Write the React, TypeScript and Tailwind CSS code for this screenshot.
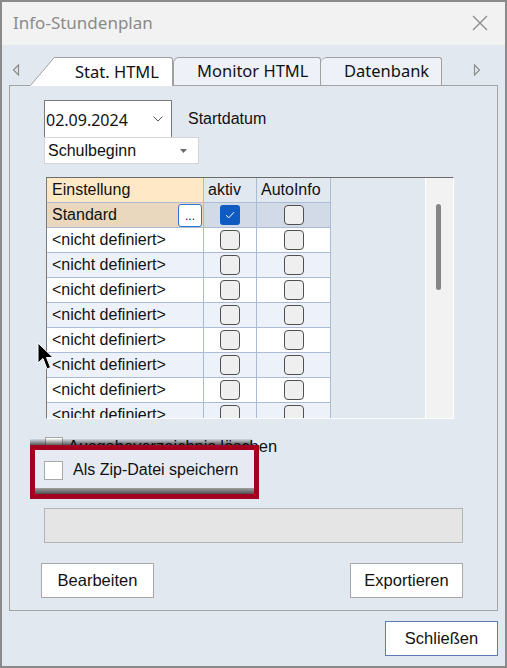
import React from 'react'

const rows = Array.from({ length: 8 }, (_, i) => i)

function GridBox({ checked }: { checked?: boolean }) {
  if (checked) {
    return (
      <div className="w-[20px] h-[20px] rounded-[3px] bg-[#0f5bc2] flex items-center justify-center">
        <svg width="10" height="8" viewBox="0 0 10 8">
          <path d="M1 4.2 L3.8 6.8 L9 1.2" fill="none" stroke="#fff" strokeWidth="1" />
        </svg>
      </div>
    )
  }
  return <div className="w-[20px] h-[20px] rounded-[4px] border border-[#505050] bg-[#efefef]" />
}

function Cell({ className, children }: { className?: string; children?: React.ReactNode }) {
  return (
    <div className={`h-[25px] border-b border-r border-[#a9bbd5] flex items-center ${className ?? ''}`}>
      {children}
    </div>
  )
}

export default function App() {
  return (
    <div className="relative w-[507px] h-[668px] border-2 border-[#8a8a8a] bg-[#e2e8f0] flex flex-col font-['Liberation_Sans',Arial,sans-serif] text-[#111] overflow-hidden">
      {/* title bar */}
      <div className="h-[43px] shrink-0 bg-[#f2f2f2] flex items-center justify-between pl-[11px] pr-[17px]">
        <span className="font-['Noto_Sans',sans-serif] text-[17px] text-[#8a8a8a] leading-none -mt-[2px]">
          Info-Stundenplan
        </span>
        <svg width="16" height="16" viewBox="0 0 16 16" className="-mt-[2px]">
          <path d="M1 1 L15 15 M15 1 L1 15" stroke="#8a8a8a" strokeWidth="1.3" />
        </svg>
      </div>

      {/* tab strip */}
      <div className="h-[40px] shrink-0 flex items-end relative z-10 font-['Noto_Sans',sans-serif] text-[16.5px]">
        <div className="w-[28px] self-start mt-[19px] flex justify-center">
          <svg width="8" height="12" viewBox="0 0 8 12">
            <path d="M6.5 1 L1.5 6 L6.5 11 Z" fill="none" stroke="#8c8c8c" strokeWidth="1.2" />
          </svg>
        </div>
        <div className="flex items-end -mb-px">
          <svg width="24" height="29" viewBox="0 0 24 29" className="block">
            <path d="M0 29 L24 1 L24 29 Z" fill="#fff" />
            <path d="M0.5 28.5 L24 0.8" stroke="#a0a0a0" strokeWidth="1" fill="none" />
          </svg>
          <div className="h-[29px] w-[119px] bg-white border-t border-r border-[#a0a0a0] rounded-tr-[3px] pl-[21px] pt-[2px] leading-[24px]">
            Stat. HTML
          </div>
        </div>
        <div className="h-[28px] w-[148px] bg-[#eef2f8] border-t border-r border-l border-[#a0a0a0] rounded-tl-[6px] rounded-tr-[3px] pl-[23px] pt-[1px] leading-[24px]">
          Monitor HTML
        </div>
        <div className="h-[28px] w-[121px] bg-[#eef2f8] border-t border-r border-[#a0a0a0] rounded-tl-[6px] rounded-tr-[3px] pl-[23px] pt-[1px] leading-[24px]">
          Datenbank
        </div>
        <div className="flex-1 self-start mt-[19px] flex justify-end pr-[24px]">
          <svg width="8" height="12" viewBox="0 0 8 12">
            <path d="M1.5 1 L6.5 6 L1.5 11 Z" fill="none" stroke="#8c8c8c" strokeWidth="1.2" />
          </svg>
        </div>
      </div>

      {/* panel */}
      <div className="ml-[7px] w-[489px] h-[526px] shrink-0 border border-[#a3a3a3] flex flex-col">
        <div className="mt-[14px] ml-[34px] flex flex-col">
          <div className="flex items-center">
            <div className="w-[128px] h-[37px] bg-white border-t border-l border-r border-[#7a7a7a] flex items-center justify-between pl-[1px] pr-[8px]">
              <span className="font-['Noto_Sans',sans-serif] text-[16px] mt-[2px]">02.09.2024</span>
              <svg width="10" height="6" viewBox="0 0 10 6">
                <path d="M0.5 0.5 L5 5 L9.5 0.5" fill="none" stroke="#555" strokeWidth="1" />
              </svg>
            </div>
            <span className="ml-[16px] text-[16px]">Startdatum</span>
          </div>
          <div className="w-[155px] h-[27px] bg-white border border-[#d4d4d4] flex items-center justify-between pl-[3px] pr-[11px]">
            <span className="text-[16px]">Schulbeginn</span>
            <svg width="7" height="4" viewBox="0 0 7 4">
              <path d="M0 0 L7 0 L3.5 4 Z" fill="#6a6a6a" />
            </svg>
          </div>
        </div>

        {/* table */}
        <div className="mt-[13px] ml-[36px] w-[408px] h-[242px] border-t border-l border-t-[#6b6b6b] border-l-[#7a7a7a] border-r border-b border-r-white border-b-white flex text-[16px]">
          <div className="flex-1 overflow-hidden">
            <div className="flex">
              <Cell className="w-[157px] bg-[#fee8c6] pl-[5px]">Einstellung</Cell>
              <Cell className="w-[53px] pl-[4px]">aktiv</Cell>
              <Cell className="w-[74px] pl-[4px]">AutoInfo</Cell>
            </div>
            <div className="flex">
              <Cell className="w-[157px] bg-[#e9d7be] pl-[5px] justify-between pr-[1px]">
                <span>Standard</span>
                <div className="w-[24px] h-[23px] rounded-[3px] border border-[#2f76d2] bg-white flex items-end justify-center text-[12px] leading-[14px] pb-[3px]">
                  ...
                </div>
              </Cell>
              <Cell className="w-[53px] bg-[#d2dae8] justify-center">
                <GridBox checked />
              </Cell>
              <Cell className="w-[74px] bg-[#d2dae8] justify-center">
                <GridBox />
              </Cell>
            </div>
            {rows.map((i) => {
              const bg = i % 2 === 0 ? 'bg-white' : 'bg-[#edf1fa]'
              return (
                <div key={i} className="flex">
                  <Cell className={`w-[157px] pl-[5px] ${bg}`}>&lt;nicht definiert&gt;</Cell>
                  <Cell className={`w-[53px] justify-center ${bg}`}>
                    <GridBox />
                  </Cell>
                  <Cell className={`w-[74px] justify-center ${bg}`}>
                    <GridBox />
                  </Cell>
                </div>
              )
            })}
          </div>
          <div className="w-[28px] shrink-0 bg-[#f2f2f2] border-l border-white pt-[26px] pl-[10px]">
            <div className="w-[5px] h-[86px] rounded-full bg-[#858585]" />
          </div>
        </div>

        <div className="mt-[15px] ml-[35px] flex items-center gap-[5px] text-[16.5px]">
          <div className="w-[18px] h-[18px] bg-white border border-[#a8a8a8]" />
          <span>Ausgabeverzeichnis löschen</span>
        </div>

        <div className="mt-[49px] ml-[34px] w-[419px] h-[35px] bg-[#e5e5e5] border border-[#b4b4b4]" />

        <div className="mt-[20px] ml-[31px] w-[422px] flex justify-between text-[16.5px]">
          <div className="w-[113px] h-[35px] bg-white border border-[#a8a8a8] flex items-center justify-center">
            Bearbeiten
          </div>
          <div className="w-[113px] h-[35px] bg-white border border-[#a8a8a8] flex items-center justify-center">
            Exportieren
          </div>
        </div>
      </div>

      <div className="mt-[10px] mr-[7px] self-end w-[113px] h-[35px] bg-white border border-[#5a7bb5] flex items-center justify-center text-[16.5px]">
        Schließen
      </div>

      {/* highlight overlay */}
      <div className="absolute left-[28px] top-[437px] w-[222px] h-[6px] bg-gradient-to-b from-[#00000010] to-[#000000a0]" />
      <div className="absolute left-[28px] top-[443px] w-[229px] h-[54px] border-[5px] border-[#a3001f] bg-[#e6eaf3] flex flex-col">
        <div className="flex-1 flex items-center pl-[9px] gap-[10px] text-[16px] pt-[2px]">
          <div className="w-[19px] h-[19px] bg-white border border-[#a8a8a8]" />
          <span>Als Zip-Datei speichern</span>
        </div>
        <div className="h-[6px] bg-gradient-to-b from-[#a0a0a0] to-[#505050]" />
      </div>

      {/* mouse cursor */}
      <svg
        width="20"
        height="30"
        viewBox="0 0 20 30"
        className="absolute left-[35px] top-[340px]"
      >
        <path d="M1 1 L1 21 L6 16.5 L10 27 L13.5 25.5 L9.5 15.5 L16 15.5 Z" fill="#000" stroke="#fff" strokeWidth="1" />
      </svg>
    </div>
  )
}
